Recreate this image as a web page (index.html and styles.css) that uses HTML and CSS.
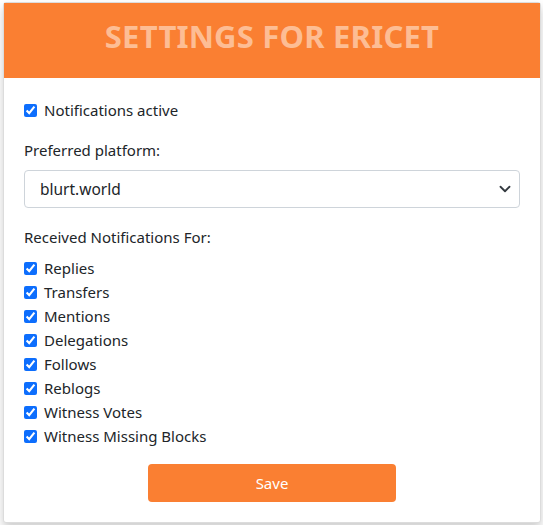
FILE: index.html
```html
<!DOCTYPE html>
<html lang="en">

<head>
    <meta charset="UTF-8">
    <meta name="viewport" content="width=device-width, initial-scale=1.0">
    <title>Settings</title>
    <link rel="stylesheet" href="styles.css">
</head>

<body>
    <div class="card">
        <div class="card_head">
            <h1>SETTINGS FOR ERICET</h1>
        </div>
        <div class="card_body">
            <label class="check"><input type="checkbox" checked> Notifications active</label>

            <label class="field_label" for="platform">Preferred platform:</label>
            <div class="select_box">
                <select id="platform">
                    <option>blurt.world</option>
                </select>
                <svg class="chevron" width="12" height="12" viewBox="0 0 16 16">
                    <path d="M2 5l6 6 6-6" fill="none" stroke="#343a40" stroke-width="2.4" stroke-linecap="round" stroke-linejoin="round"/>
                </svg>
            </div>

            <div class="field_label list_label">Received Notifications For:</div>
            <ul class="notify_list">
                <li><label class="check"><input type="checkbox" checked> Replies</label></li>
                <li><label class="check"><input type="checkbox" checked> Transfers</label></li>
                <li><label class="check"><input type="checkbox" checked> Mentions</label></li>
                <li><label class="check"><input type="checkbox" checked> Delegations</label></li>
                <li><label class="check"><input type="checkbox" checked> Follows</label></li>
                <li><label class="check"><input type="checkbox" checked> Reblogs</label></li>
                <li><label class="check"><input type="checkbox" checked> Witness Votes</label></li>
                <li><label class="check"><input type="checkbox" checked> Witness Missing Blocks</label></li>
            </ul>

            <div class="actions">
                <button class="save_btn">Save</button>
            </div>
        </div>
    </div>
</body>

</html>
```

FILE: styles.css
```css
* {
    margin: 0;
    padding: 0;
    box-sizing: border-box;
}

body {
    padding: 2px 3px;
    font-family: "Noto Sans", "Open Sans", sans-serif;
    font-size: 15px;
    color: #212529;
    background-color: #fff;
}

.card {
    width: 538px;
    border: 1px solid #dcdcdc;
    border-radius: 3px;
    background-color: #fff;
    box-shadow: 0 5px 10px rgba(0, 0, 0, 0.2);
}

.card_head {
    height: 75px;
    padding-bottom: 10px;
    display: flex;
    align-items: center;
    justify-content: center;
    background-color: #fa7f32;
}

.card_head h1 {
    font-size: 31px;
    font-weight: 700;
    color: #fdbd94;
    letter-spacing: 0.2px;
}

.card_body {
    padding: 20px 20px 20px 20px;
    display: flex;
    flex-direction: column;
}

.check {
    display: flex;
    align-items: center;
    gap: 7px;
    height: 24px;
    line-height: 24px;
}

.check input {
    width: 13px;
    height: 13px;
    accent-color: #0d6efd;
}

.field_label {
    display: block;
    margin-top: 16px;
    line-height: 24px;
}

.list_label {
    margin-top: 17px;
}

.select_box {
    position: relative;
    margin-top: 8px;
}

.select_box select {
    display: block;
    width: 100%;
    height: 38px;
    padding: 0 15px;
    border: 1px solid #ced4da;
    border-radius: 4px;
    font-family: inherit;
    font-size: 15.5px;
    color: #212529;
    background-color: #fff;
    appearance: none;
    -webkit-appearance: none;
}

.chevron {
    position: absolute;
    top: 13px;
    right: 9px;
}

.notify_list {
    list-style: none;
    margin-top: 7px;
}

.actions {
    display: flex;
    justify-content: center;
    margin-top: 16px;
}

.save_btn {
    width: 248px;
    height: 38px;
    border: none;
    border-radius: 4px;
    background-color: #fa7f32;
    color: #fff;
    font-family: inherit;
    font-size: 15px;
}
```
